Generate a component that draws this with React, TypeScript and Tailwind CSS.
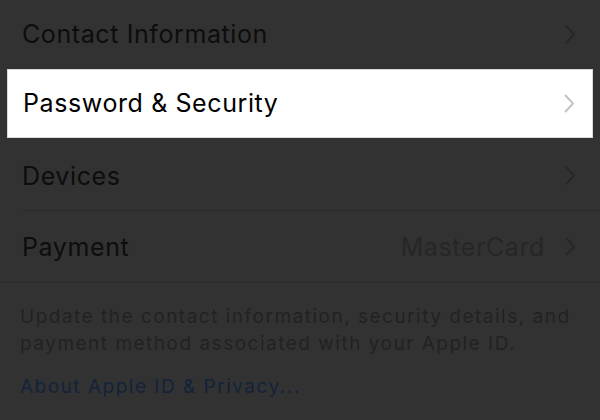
import React from "react";

const Chevron = ({ className }: { className: string }) => (
  <svg width="11" height="19" viewBox="0 0 11 19" className={className}>
    <path d="M1.5 1.5 L9 9.5 L1.5 17.5" fill="none" stroke="currentColor" strokeWidth="2" strokeLinecap="round" strokeLinejoin="round" />
  </svg>
);

const Row = ({ label, value, last }: { label: string; value?: string; last?: boolean }) => (
  <div className="pl-[22px]">
    <div className={`h-[71px] flex items-center pt-[3px] pr-[24px] ${last ? "" : "border-b border-[#292929]"}`}>
      <span className="flex-1 text-[25px] tracking-[0.6px] text-[#0d0d0d]">{label}</span>
      {value && <span className="text-[25px] tracking-[0.6px] text-[#262626] mr-[20px]">{value}</span>}
      <Chevron className="text-[#272727] -mt-[3px]" />
    </div>
  </div>
);

export default function App() {
  return (
    <div
      className="w-[600px] h-[420px] bg-[#323232] overflow-hidden"
      style={{ fontFamily: "Inter, 'Liberation Sans', sans-serif" }}
    >
      <div className="pl-[22px] h-[69px] flex items-center pr-[24px]">
        <span className="flex-1 text-[25px] tracking-[0.6px] text-[#0d0d0d]">Contact Information</span>
        <Chevron className="text-[#272727]" />
      </div>
      <div className="mx-[7px] h-[69px] bg-white flex items-center pl-[15px] pr-[17px] border border-[#d8d8d8]">
        <span className="flex-1 text-[25px] tracking-[0.6px] text-black">Password &amp; Security</span>
        <Chevron className="text-[#c4c4c8]" />
      </div>
      <div className="h-[2px]" />
      <Row label="Devices" />
      <Row label="Payment" value="MasterCard" last />
      <div className="border-t border-[#2a2a2a] px-[20px] pt-[20px]">
        <p className="text-[19px] leading-[27px] tracking-[1.5px] text-[#222222]">
          Update the contact information, security details, and payment method associated with your Apple ID.
        </p>
        <p className="mt-[16px] text-[19px] tracking-[1.5px] text-[#12233a]">About Apple ID &amp; Privacy...</p>
      </div>
    </div>
  );
}
